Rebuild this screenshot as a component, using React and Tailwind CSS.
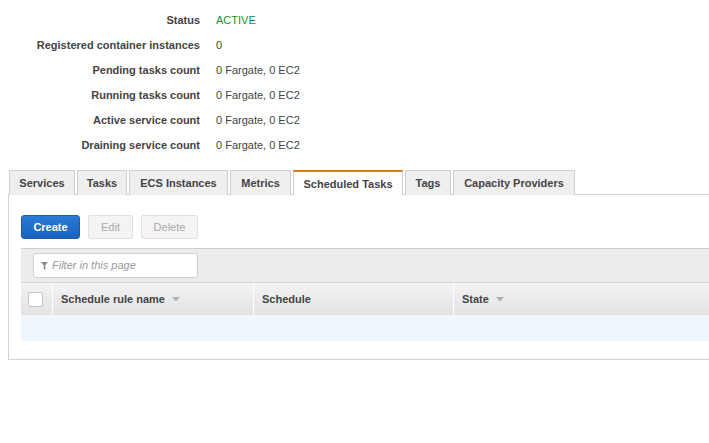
import React from "react";

const rows = [
  ["Status", "ACTIVE", true],
  ["Registered container instances", "0"],
  ["Pending tasks count", "0 Fargate, 0 EC2"],
  ["Running tasks count", "0 Fargate, 0 EC2"],
  ["Active service count", "0 Fargate, 0 EC2"],
  ["Draining service count", "0 Fargate, 0 EC2"],
];

const tabs = [
  ["Services", "w-[66px]"],
  ["Tasks", "w-[50px]"],
  ["ECS Instances", "w-[99px]"],
  ["Metrics", "w-[61px]"],
  ["Scheduled Tasks", "w-[110px]", true],
  ["Tags", "w-[46px]"],
  ["Capacity Providers", "w-[122px]"],
];

function Caret() {
  return (
    <svg width="8" height="5" viewBox="0 0 8 5" className="ml-[7px] mt-[1px]">
      <path d="M0 0 L8 0 L4 4.5 Z" fill="#b0b0b0" />
    </svg>
  );
}

export default function App() {
  return (
    <div
      className="w-full h-[443px] overflow-hidden bg-white text-[11px] text-[#444]"
      style={{ fontFamily: '"Liberation Sans", Arial, sans-serif' }}
    >
      <div className="grid grid-cols-[200px_auto] gap-x-[16px] pt-[8px]">
        {rows.map(([l, v, g]) => (
          <React.Fragment key={l}>
            <div className="h-[25px] flex items-center justify-end font-bold">{l}</div>
            <div
              className={
                "h-[25px] flex items-center " + (g ? "text-[#1d8f2e]" : "")
              }
            >
              {v}
            </div>
          </React.Fragment>
        ))}
      </div>

      <div className="mt-[12px] ml-[9px] flex gap-[2px] h-[24px] relative z-10">
        {tabs.map(([t, w, active]) => (
          <div
            key={t}
            className={
              w +
              " h-[25px] flex items-center justify-center font-bold " +
              (active
                ? "bg-white border-x border-x-[#ccc] border-t-2 border-t-[#dd7b14] pt-[1px]"
                : "bg-[#efefef] border border-[#cfcfcf] border-b-0 h-[24px]")
            }
          >
            {t}
          </div>
        ))}
      </div>

      <div className="ml-[8px] w-[720px] h-[166px] border border-[#d2d2d2] bg-white pl-[12px]">
        <div className="flex gap-[8px] mt-[20px] h-[24px]">
          <div className="w-[59px] h-[24px] rounded-[3px] border border-[#1b5cad] bg-gradient-to-b from-[#2a7ad6] to-[#1762bf] text-white font-bold flex items-center justify-center">
            Create
          </div>
          <div className="w-[45px] h-[24px] rounded-[2px] border border-[#e0e0e0] bg-[#f4f4f4] text-[#aaa] flex items-center justify-center">
            Edit
          </div>
          <div className="w-[57px] h-[24px] rounded-[2px] border border-[#e0e0e0] bg-[#f4f4f4] text-[#aaa] flex items-center justify-center">
            Delete
          </div>
        </div>

        <div className="mt-[9px] border-t border-[#cdcdcd]">
          <div className="bg-[#ececec] h-[33px] pt-[4px] pl-[12px]">
            <div className="w-[165px] h-[25px] bg-white border border-[#cfcfcf] rounded-[3px] flex items-center pl-[7px]">
              <svg width="7" height="8" viewBox="0 0 7 8">
                <path d="M0 0 H7 L4.3 3.3 V8 L2.7 7 V3.3 Z" fill="#8a8a8a" />
              </svg>
              <span className="ml-[4px] italic text-[#999]">Filter in this page</span>
            </div>
          </div>
          <div className="flex h-[33px] border-t border-[#d6d6d6] bg-gradient-to-b from-[#f3f3f3] to-[#e3e3e3] font-bold">
            <div className="w-[32px] flex items-center justify-center border-r border-white">
              <div className="w-[15px] h-[15px] bg-white border border-[#c4c4c4] rounded-[2px] ml-[-2px]" />
            </div>
            <div className="w-[201px] flex items-center pl-[8px] border-r border-white">
              Schedule rule name
              <Caret />
            </div>
            <div className="w-[200px] flex items-center pl-[8px] border-r border-white">
              Schedule
            </div>
            <div className="flex-1 flex items-center pl-[8px]">
              State
              <Caret />
            </div>
          </div>
          <div className="h-[26px] bg-[#eff6fd]" />
        </div>
      </div>
    </div>
  );
}
